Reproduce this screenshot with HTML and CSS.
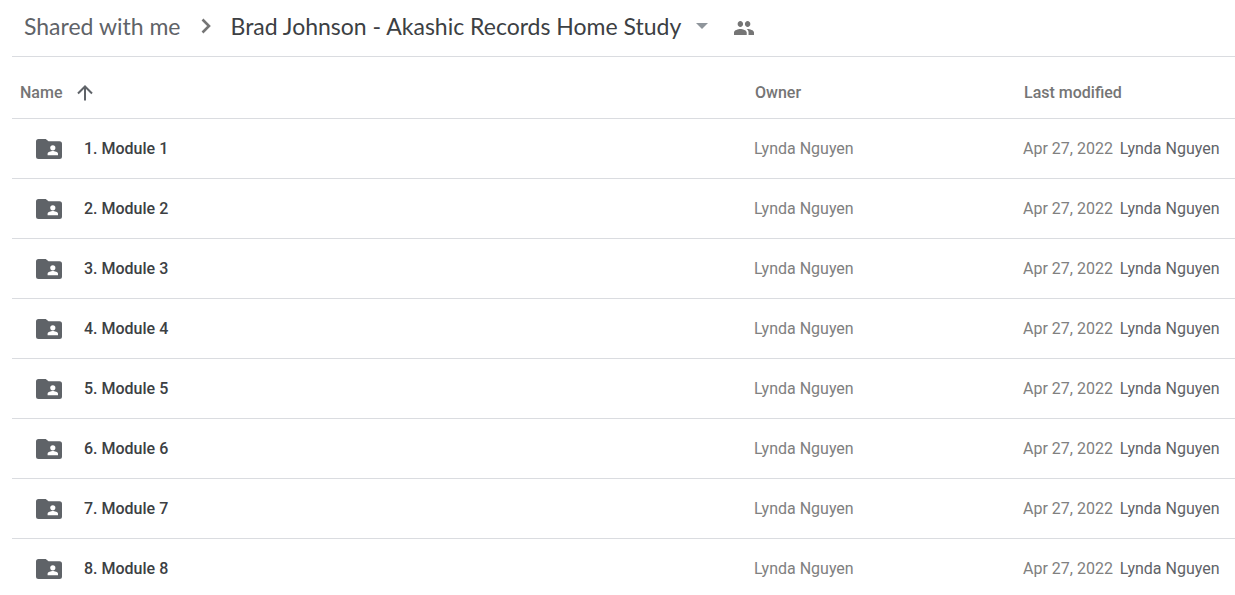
FILE: index.html
```
<!DOCTYPE html>
<html lang="en">
<head>
    <meta charset="UTF-8">
    <meta name="viewport" content="width=device-width, initial-scale=1.0">
    <title>Brad Johnson - Akashic Records Home Study</title>
    <link rel="stylesheet" href="styles.css">
</head>
<body>
    <!-- Folder icon shared by all rows -->
    <svg class="sprite" aria-hidden="true">
        <symbol id="shared-folder" viewBox="0 0 26 20">
            <path fill="#5f6368" d="M2.5 0h7.2l2.8 2.3h11A2.5 2.5 0 0 1 26 4.800v12.700a2.500 2.500 0 0 1-2.500 2.500h-21A2.500 2.500 0 0 1 0 17.500v-15A2.500 2.500 0 0 1 2.500 0z"/>
            <circle fill="#fff" cx="16.800" cy="8.800" r="2.600"/>
            <path fill="#fff" d="M11.600 16.200v-1.400c0-1.800 3.500-2.700 5.200-2.700s5.200.9 5.200 2.700v1.400z"/>
        </symbol>
    </svg>

    <header class="path-bar">
        <nav class="breadcrumb">
            <a class="crumb" href="#">Shared with me</a>
            <svg class="chevron" width="10" height="16" viewBox="0 0 10 16" aria-hidden="true">
                <path d="M1.500 1.500L8 8l-6.500 6.500" fill="none" stroke="#757575" stroke-width="2.600"/>
            </svg>
            <button class="crumb current" type="button">
                Brad Johnson - Akashic Records Home Study
                <svg width="12" height="6" viewBox="0 0 12 6" aria-hidden="true">
                    <path d="M0 0h12L6 6z" fill="#8f959b"/>
                </svg>
            </button>
        </nav>
        <button class="people" type="button" aria-label="Manage people">
            <svg width="20" height="14" viewBox="1 5 22 14" preserveAspectRatio="none" aria-hidden="true">
                <path fill="#757575" d="M16 11c1.660 0 2.990-1.340 2.990-3S17.660 5 16 5c-1.660 0-3 1.340-3 3s1.340 3 3 3zm-8 0c1.660 0 2.990-1.340 2.990-3S9.660 5 8 5C6.340 5 5 6.340 5 8s1.340 3 3 3zm0 2c-2.330 0-7 1.170-7 3.500V19h14v-2.500c0-2.330-4.670-3.500-7-3.500zm8 0c-.29 0-.62.020-.97.050 1.160.840 1.970 1.970 1.970 3.450V19h6v-2.500c0-2.330-4.670-3.500-7-3.500z"/>
            </svg>
        </button>
    </header>

    <main>
        <table class="files">
            <thead>
                <tr>
                    <th class="col-name" scope="col" aria-sort="ascending">
                        <button class="sort" type="button">
                            Name
                            <svg width="16" height="16" viewBox="0 0 16 16" aria-hidden="true">
                                <path d="M8 15.500V2M1 8.500l7-7 7 7" fill="none" stroke="#5f6368" stroke-width="2"/>
                            </svg>
                        </button>
                    </th>
                    <th class="col-owner" scope="col">Owner</th>
                    <th class="col-modified" scope="col">Last modified</th>
                </tr>
            </thead>
            <tbody>
                <tr>
                    <td><div class="file"><svg class="folder"><use href="#shared-folder"/></svg>1. Module 1</div></td>
                    <td>Lynda Nguyen</td>
                    <td>Apr 27, 2022 <span class="editor">Lynda Nguyen</span></td>
                </tr>
                <tr>
                    <td><div class="file"><svg class="folder"><use href="#shared-folder"/></svg>2. Module 2</div></td>
                    <td>Lynda Nguyen</td>
                    <td>Apr 27, 2022 <span class="editor">Lynda Nguyen</span></td>
                </tr>
                <tr>
                    <td><div class="file"><svg class="folder"><use href="#shared-folder"/></svg>3. Module 3</div></td>
                    <td>Lynda Nguyen</td>
                    <td>Apr 27, 2022 <span class="editor">Lynda Nguyen</span></td>
                </tr>
                <tr>
                    <td><div class="file"><svg class="folder"><use href="#shared-folder"/></svg>4. Module 4</div></td>
                    <td>Lynda Nguyen</td>
                    <td>Apr 27, 2022 <span class="editor">Lynda Nguyen</span></td>
                </tr>
                <tr>
                    <td><div class="file"><svg class="folder"><use href="#shared-folder"/></svg>5. Module 5</div></td>
                    <td>Lynda Nguyen</td>
                    <td>Apr 27, 2022 <span class="editor">Lynda Nguyen</span></td>
                </tr>
                <tr>
                    <td><div class="file"><svg class="folder"><use href="#shared-folder"/></svg>6. Module 6</div></td>
                    <td>Lynda Nguyen</td>
                    <td>Apr 27, 2022 <span class="editor">Lynda Nguyen</span></td>
                </tr>
                <tr>
                    <td><div class="file"><svg class="folder"><use href="#shared-folder"/></svg>7. Module 7</div></td>
                    <td>Lynda Nguyen</td>
                    <td>Apr 27, 2022 <span class="editor">Lynda Nguyen</span></td>
                </tr>
                <tr>
                    <td><div class="file"><svg class="folder"><use href="#shared-folder"/></svg>8. Module 8</div></td>
                    <td>Lynda Nguyen</td>
                    <td>Apr 27, 2022 <span class="editor">Lynda Nguyen</span></td>
                </tr>
            </tbody>
        </table>
    </main>
</body>
</html>
```
FILE: styles.css
```
* {
    margin: 0;
    padding: 0;
    box-sizing: border-box;
}

body {
    padding-left: 12px;
    background-color: #fff;
    color: #757575;
    font-family: Roboto, "Liberation Sans", sans-serif;
    font-size: 16px;
    line-height: 20px;
}

button {
    border: none;
    background: none;
    color: inherit;
    font: inherit;
    cursor: pointer;
}

.sprite {
    display: none;
}

/* Path bar */
.path-bar {
    display: flex;
    align-items: center;
    gap: 26px;
    padding: 12px 12px 16px;
    border-bottom: 1px solid #dadce0;
}

.breadcrumb {
    display: flex;
    align-items: center;
    gap: 20px;
}

.crumb {
    color: #5f6368;
    font-family: "Google Sans", Lato, sans-serif;
    font-size: 23px;
    line-height: 28px;
    text-decoration: none;
    white-space: nowrap;
}

.current {
    display: flex;
    align-items: center;
    gap: 15px;
    color: #3c4043;
}

.people {
    display: flex;
    padding-top: 4px;
}

/* File list */
.files {
    width: 100%;
    table-layout: fixed;
    border-collapse: separate;
    border-spacing: 0;
}

.files th,
.files td {
    height: 60px;
    border-bottom: 1px solid #dadce0;
    text-align: left;
    vertical-align: middle;
    white-space: nowrap;
}

.files th {
    height: 62px;
    padding-top: 10px;
    padding-left: 2px;
    font-weight: 500;
}

.files td {
    padding-left: 1px;
    color: #808080;
}

.files .col-name {
    padding-left: 8px;
}

.col-owner {
    width: 269px;
}

.col-modified {
    width: 213px;
}

.sort {
    display: flex;
    align-items: center;
    gap: 15px;
}

.file {
    display: flex;
    align-items: center;
    gap: 22px;
    padding-left: 23px;
    color: #3c4043;
    font-weight: 500;
}

.folder {
    width: 26px;
    height: 20px;
}

.editor {
    margin-left: 3px;
    color: #5f6368;
}
```
